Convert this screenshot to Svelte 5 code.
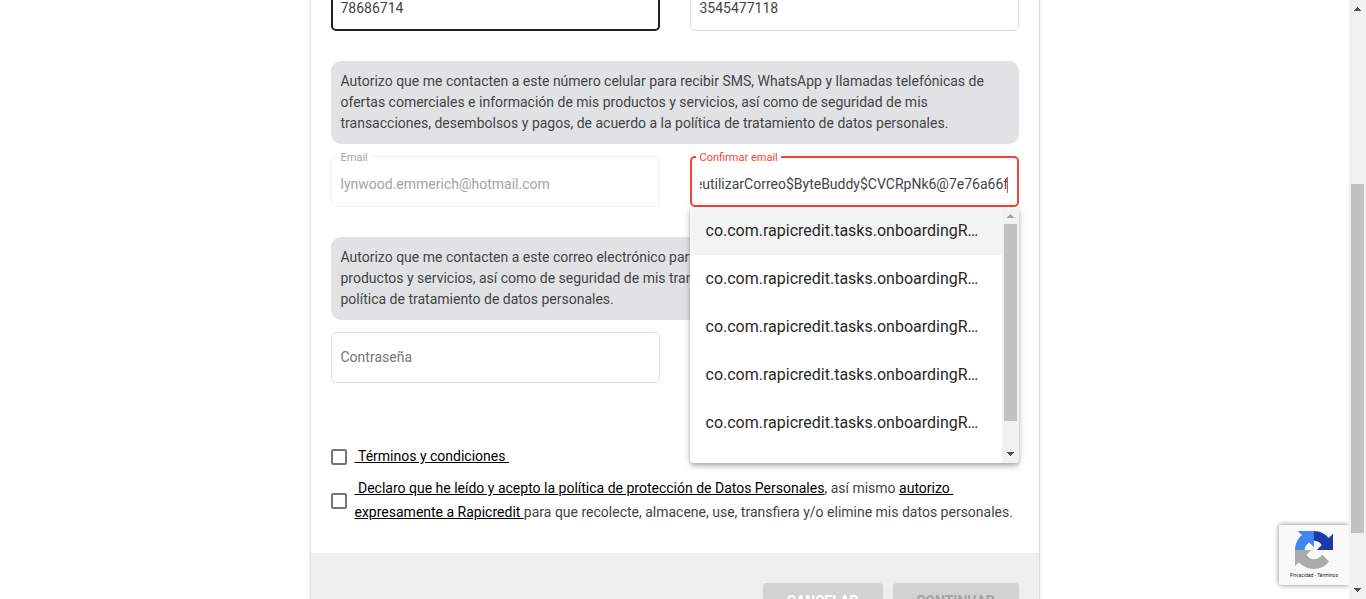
<script>
  import { onMount } from 'svelte';

  const suggestions = Array.from({ length: 6 }, (_, id) => ({
    id,
    text: 'co.com.rapicredit.tasks.onboardingReutilizarCorreo$ByteBuddy$CVCRpNk6@7e76a66f'
  }));

  let documento = $state('78686714');
  let celular = $state('3545477118');
  let email = $state('lynwood.emmerich@hotmail.com');
  let confirmar = $state(suggestions[0].text);
  let clave = $state('');
  let confirmInput;

  // Keep the end of the long value in view, where the caret sits.
  onMount(() => {
    const toEnd = () => (confirmInput.scrollLeft = confirmInput.scrollWidth);
    toEnd();
    document.fonts.ready.then(toEnd);
  });
</script>

{#snippet scrollbar(kind)}
  <div class="scrollbar {kind}" aria-hidden="true">
    <svg class="arrow" viewBox="0 0 17 17"><path d="M8 7h1v1h1v1h1v1h1v1H5v-1h1V9h1V8h1z" /></svg>
    <div class="track"><div class="thumb"></div></div>
    <svg class="arrow down" viewBox="0 0 17 17"><path d="M5 6h7v1h-1v1h-1v1H9v1H8V9H7V8H6V7H5z" /></svg>
  </div>
{/snippet}

<div class="shell">
  <main>
    <form class="card">
      <div class="body">
        <div class="row">
          <div class="field focused">
            <input aria-label="Documento" bind:value={documento} />
          </div>
          <div class="field">
            <input aria-label="Celular" bind:value={celular} />
          </div>
        </div>

        <p class="notice">
          Autorizo que me contacten a este número celular para recibir SMS, WhatsApp y llamadas
          telefónicas de ofertas comerciales e información de mis productos y servicios, así como de
          seguridad de mis transacciones, desembolsos y pagos, de acuerdo a la política de
          tratamiento de datos personales.
        </p>

        <div class="row">
          <div class="field disabled">
            <label for="email">Email</label>
            <input id="email" type="email" bind:value={email} disabled />
          </div>
          <div class="field invalid">
            <label for="confirmar">Confirmar email</label>
            <input id="confirmar" bind:this={confirmInput} bind:value={confirmar} />
            <span class="caret"></span>
            <div class="panel">
              <ul role="listbox" aria-label="Sugerencias">
                {#each suggestions as s, i (s.id)}
                  <li role="option" aria-selected={i === 0} class:active={i === 0}>{s.text}</li>
                {/each}
              </ul>
              {@render scrollbar('list')}
            </div>
          </div>
        </div>

        <p class="notice">
          Autorizo que me contacten a este correo electrónico para recibir ofertas comerciales e
          información de mis productos y servicios, así como de seguridad de mis transacciones,
          desembolsos y pagos, de acuerdo a la política de tratamiento de datos personales.
        </p>

        <div class="row">
          <div class="field">
            <input type="password" placeholder="Contraseña" aria-label="Contraseña" bind:value={clave} />
          </div>
          <div></div>
        </div>

        <div class="checks">
          <div class="check">
            <input type="checkbox" id="terminos" />
            <label for="terminos"><a href="#terminos">&nbsp;Términos y condiciones&nbsp;</a></label>
          </div>
          <div class="check">
            <input type="checkbox" id="datos" />
            <label for="datos"><a href="#politica">&nbsp;Declaro que he leído y acepto la política de protección de Datos Personales</a>, así mismo <a href="#autorizo">autorizo&nbsp;<br />expresamente a Rapicredit&nbsp;</a>para que recolecte, almacene, use, transfiera y/o elimine mis datos personales.</label>
          </div>
        </div>
      </div>

      <footer>
        <button type="button" class="cancel">CANCELAR</button>
        <button type="submit" class="next" disabled>CONTINUAR</button>
      </footer>
    </form>

    <aside class="badge">
      <svg viewBox="0 0 64 64" aria-hidden="true">
        <path fill="#1c3aa9" d="M64 31.955l-.033-1.37V4.687l-7.16 7.16C50.948 4.674 42.033.093 32.05.093c-10.4 0-19.622 4.96-25.458 12.64l11.736 11.86a15.55 15.55 0 0 1 4.754-5.334c2.05-1.6 4.952-2.906 8.968-2.906.485 0 .86.057 1.135.163 4.976.393 9.288 3.14 11.828 7.124l-8.307 8.307L64 31.953" />
        <path fill="#4285f4" d="M31.862.094l-1.37.033H4.594l7.16 7.16C4.58 13.147 0 22.06 0 32.046c0 10.4 4.96 19.622 12.64 25.458L24.5 45.768a15.55 15.55 0 0 1-5.334-4.754c-1.6-2.05-2.906-4.952-2.906-8.968 0-.485.057-.86.163-1.135.393-4.976 3.14-9.288 7.124-11.828l8.307 8.307L31.86.095" />
        <path fill="#ababab" d="M.001 32.045l.033 1.37v25.898l7.16-7.16c5.86 7.173 14.774 11.754 24.76 11.754 10.4 0 19.622-4.96 25.458-12.64l-11.736-11.86a15.55 15.55 0 0 1-4.754 5.334c-2.05 1.6-4.952 2.906-8.968 2.906-.485 0-.86-.057-1.135-.163-4.976-.393-9.288-3.14-11.828-7.124l8.307-8.307c-10.522.04-22.4.066-27.295-.005" />
      </svg>
      <div class="legal"><a href="#privacidad">Privacidad</a> - <a href="#condiciones">Términos</a></div>
    </aside>
  </main>
  {@render scrollbar('page')}
</div>

<style>
  :global(body) {
    font-family: Roboto, "Liberation Sans", sans-serif;
    font-size: 14px;
    color: #444;
    background: #fff;
  }
  * { box-sizing: border-box; }

  .shell { display: flex; height: 100vh; }
  main { position: relative; flex: 1; min-width: 0; overflow: hidden; }

  .card {
    max-width: 730px;
    margin: -40px auto 0;
    border: 1px solid #dcdcdc;
    box-shadow: 0 1px 3px rgba(0, 0, 0, 0.12);
    background: #fff;
  }
  .body { padding: 19px 20px 29px; }

  .row { display: grid; grid-template-columns: 1fr 1fr; gap: 30px; margin-bottom: 30px; }
  .field {
    position: relative;
    height: 51px;
    border: 1px solid #dedede;
    border-radius: 5px;
    padding: 0 9px;
  }
  .field > input {
    display: block;
    width: 100%;
    height: 100%;
    padding: 4px 0 0;
    border: 0;
    outline: 0;
    background: none;
    font: inherit;
    color: inherit;
  }
  .field > input::placeholder { color: #757575; opacity: 1; }
  .field > input[type='password'] { padding: 0 0 2px; }
  .field label {
    position: absolute;
    top: -6px;
    left: 5px;
    padding: 0 3px 0 4px;
    background: #fff;
    font-size: 11px;
    line-height: 13px;
  }
  .focused { border: 2px solid #212121; padding: 0 8px; }
  .disabled { border-color: #f0f0f0; color: #a3a3a3; }
  .invalid { border: 2px solid #f44336; padding: 0 8px; }
  .invalid label { top: -7px; left: 4px; color: #f44336; }
  .caret {
    position: absolute;
    top: 19px;
    right: 9px;
    width: 1px;
    height: 16px;
    background: #f44336;
  }

  .notice {
    margin: 0 0 12px;
    padding: 10px;
    border-radius: 10px;
    background: #e0e2e4;
    line-height: 21px;
  }

  .panel {
    position: absolute;
    z-index: 2;
    top: 49px;
    left: -2px;
    right: -2px;
    display: flex;
    height: 256px;
    overflow: hidden;
    border-radius: 0 0 4px 4px;
    background: #fff;
    box-shadow: 0 2px 4px -1px rgba(0, 0, 0, 0.2), 0 4px 5px rgba(0, 0, 0, 0.14), 0 1px 10px rgba(0, 0, 0, 0.12);
  }
  ul { flex: 1; min-width: 0; margin: 0; padding: 0; list-style: none; }
  li {
    padding: 0 16px;
    overflow: hidden;
    text-overflow: ellipsis;
    white-space: nowrap;
    font-size: 16px;
    line-height: 48px;
    color: #282828;
  }
  li.active { background: #f4f4f4; }

  .scrollbar { display: flex; flex-direction: column; width: 17px; background: #f1f1f1; }
  .arrow { width: 17px; height: 17px; fill: #505050; }
  .list .arrow:not(.down) { fill: #a3a3a3; }
  .track { flex: 1; padding: 0 2px; }
  .thumb { background: #c1c1c1; }
  .list .thumb { height: 197px; }
  .page .track { padding-top: 167px; }
  .page .thumb { height: 349px; }

  .checks { display: grid; gap: 8px; margin-top: 61px; line-height: 24px; }
  .check { display: flex; align-items: center; gap: 8px; }
  .check input {
    appearance: none;
    flex: none;
    width: 16px;
    height: 16px;
    margin: 2px 0 0;
    border: 2px solid #757575;
    border-radius: 2px;
  }
  .check a { color: #000; text-decoration: underline; }

  footer {
    display: flex;
    justify-content: flex-end;
    gap: 10px;
    padding: 30px 20px;
    background: #efefef;
  }
  button {
    height: 36px;
    padding: 0;
    border: 0;
    border-radius: 4px;
    background: #d2d2d2;
    font: 700 14px Roboto, "Liberation Sans", sans-serif;
  }
  .cancel { width: 120px; color: #fff; }
  .next { width: 126px; color: #a3a3a3; }

  .badge {
    position: absolute;
    right: 0;
    bottom: 14px;
    width: 70px;
    height: 60px;
    padding-top: 6px;
    border-radius: 2px 0 0 2px;
    background: #f9f9f9;
    box-shadow: 0 0 5px gray;
    text-align: center;
  }
  .badge svg { display: block; width: 38px; height: 38px; margin: 0 auto; }
  .legal { font-size: 5px; line-height: 12px; color: #222; }
  .legal a { color: inherit; text-decoration: none; }
</style>
